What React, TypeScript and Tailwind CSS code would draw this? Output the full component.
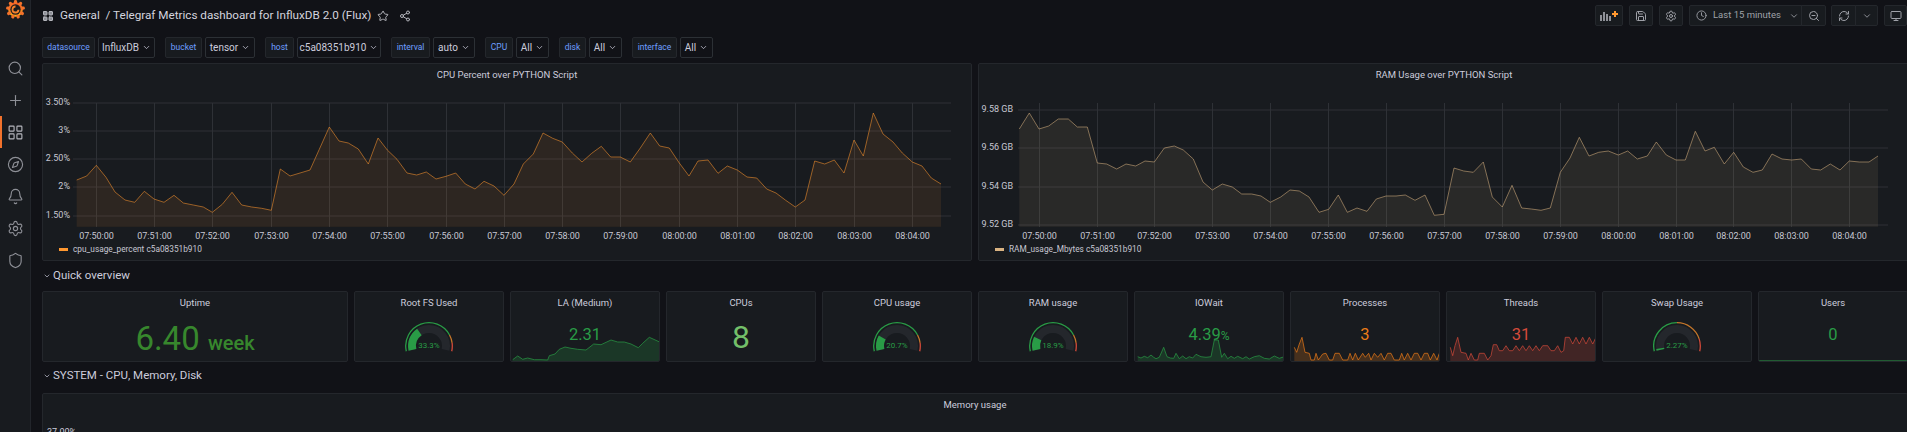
import { Bell, ChevronDown, Clock, Compass, LayoutGrid, Monitor, Plus, RefreshCw, Save, Search, Settings, Share2, Shield, Star, ZoomOut } from "lucide-react"

const cpuPoints: number[][] = [
  [230, 360], [260, 348], [289, 316], [318, 352], [345, 396], [375, 420], [404, 427], [433, 394], [462, 417], [492, 427],
  [522, 406], [550, 429], [580, 435], [610, 441], [637, 457], [667, 433], [696, 397], [725, 435], [755, 441], [785, 445],
  [814, 451], [841, 327], [870, 348], [900, 339], [930, 330], [958, 268], [988, 201], [1017, 243], [1045, 249], [1075, 267],
  [1105, 312], [1134, 234], [1162, 270], [1191, 298], [1221, 339], [1250, 345], [1279, 336], [1308, 357], [1338, 349], [1367, 339],
  [1396, 372], [1425, 387], [1452, 364], [1482, 378], [1512, 406], [1542, 372], [1570, 312], [1600, 282], [1629, 219], [1658, 235],
  [1687, 246], [1717, 279], [1746, 306], [1775, 280], [1804, 259], [1832, 291], [1861, 291], [1891, 306], [1921, 264], [1951, 219],
  [1979, 258], [2008, 264], [2038, 309], [2067, 348], [2094, 303], [2124, 300], [2154, 340], [2182, 318], [2212, 330], [2241, 351],
  [2270, 354], [2300, 387], [2328, 399], [2357, 421], [2386, 441], [2415, 420], [2444, 303], [2474, 312], [2503, 300], [2532, 339],
  [2562, 240], [2590, 288], [2620, 159], [2649, 222], [2679, 246], [2707, 279], [2737, 306], [2766, 318], [2794, 354], [2823, 372],
]

// zoom coords, x counted from page x=970
const ramPoints: number[][] = [
  [148, 207], [178, 159], [207, 207], [236, 198], [265, 177], [295, 177], [322, 201], [352, 201], [382, 309], [410, 312],
  [440, 327], [468, 312], [497, 318], [525, 303], [553, 306], [583, 264], [613, 258], [640, 270], [670, 297], [699, 366],
  [727, 390], [757, 372], [787, 381], [815, 402], [845, 402], [873, 408], [901, 427], [932, 411], [960, 390], [988, 393],
  [1017, 411], [1047, 457], [1076, 448], [1105, 405], [1132, 457], [1161, 444], [1191, 454], [1219, 417], [1248, 408], [1278, 408],
  [1306, 405], [1335, 421], [1365, 405], [1393, 466], [1422, 463], [1452, 324], [1481, 333], [1510, 337], [1540, 306], [1567, 411],
  [1597, 441], [1626, 376], [1655, 444], [1684, 447], [1713, 451], [1741, 444], [1771, 337], [1800, 294], [1828, 232], [1857, 288],
  [1886, 277], [1915, 273], [1945, 285], [1973, 273], [2002, 297], [2032, 288], [2059, 246], [2089, 285], [2118, 300], [2146, 300],
  [2176, 214], [2205, 273], [2233, 262], [2263, 312], [2291, 277], [2320, 321], [2349, 337], [2377, 330], [2406, 282], [2436, 297],
  [2465, 300], [2494, 297], [2524, 327], [2552, 330], [2581, 312], [2610, 330], [2638, 303], [2668, 306], [2697, 306], [2724, 288],
]

const cpuGridX = [96.5, 154.5, 212.5, 271.5, 329.5, 387.5, 446.5, 504.5, 562.5, 620.5, 679.5, 737.5, 795.5, 854.5, 912.5]
const ramGridX = [1039.5, 1097.5, 1154.5, 1212.5, 1270.5, 1328.5, 1386.5, 1444.5, 1502.5, 1560.5, 1618.5, 1676.5, 1733.5, 1791.5, 1849.5]
const times = ["07:50:00", "07:51:00", "07:52:00", "07:53:00", "07:54:00", "07:55:00", "07:56:00", "07:57:00", "07:58:00", "07:59:00", "08:00:00", "08:01:00", "08:02:00", "08:03:00", "08:04:00"]

const variables = [
  { label: "datasource", labelW: "w-[53px]", value: "InfluxDB", valueW: "w-[57px]" },
  { label: "bucket", labelW: "w-[37px]", value: "tensor", valueW: "w-[50px]" },
  { label: "host", labelW: "w-[29px]", value: "c5a08351b910", valueW: "w-[84px]" },
  { label: "interval", labelW: "w-[39px]", value: "auto", valueW: "w-[42px]" },
  { label: "CPU", labelW: "w-[28px]", value: "All", valueW: "w-[33px]" },
  { label: "disk", labelW: "w-[27px]", value: "All", valueW: "w-[33px]" },
  { label: "interface", labelW: "w-[45px]", value: "All", valueW: "w-[33px]" },
]

const toPath = (pts: number[][]) => pts.map((p, i) => `${i ? "L" : "M"}${p[0].toFixed(1)} ${p[1].toFixed(1)}`).join(" ")

function TimeChart(props: {
  points: number[][]
  originX: number
  viewX: number
  width: number
  gridX: number[]
  gridY: number[]
  yLabels: string[]
  labelX: number
  lineLeft: number
  lineRight: number
  color: string
  legend: string
  legendX: number
}) {
  const pts = props.points.map((p) => [props.originX + p[0] / 3, 60 + p[1] / 3])
  const area = `${toPath(pts)} L${pts[pts.length - 1][0].toFixed(1)} 226.7 L${pts[0][0].toFixed(1)} 226.7 Z`
  return (
    <svg width={props.width} height={174} viewBox={`${props.viewX} 86 ${props.width} 174`} className="block">
      {props.gridY.map((y) => (
        <line key={y} x1={props.lineLeft} x2={props.lineRight} y1={y} y2={y} stroke="#2e3136" />
      ))}
      {props.gridX.map((x) => (
        <line key={x} x1={x} x2={x} y1={103} y2={227} stroke="#2e3136" />
      ))}
      <path d={area} fill={props.color} fillOpacity={0.095} />
      <path d={toPath(pts)} fill="none" stroke={props.color} strokeOpacity={0.55} strokeWidth={1} />
      {props.gridY.map((y, i) => (
        <text key={y} x={props.labelX} y={y + 2} textAnchor="end" className="fill-[#c7c7d2] text-[9px]">
          {props.yLabels[i]}
        </text>
      ))}
      {props.gridX.map((x, i) => (
        <text key={x} x={x} y={239} textAnchor="middle" className="fill-[#c7c7d2] text-[9px]">
          {times[i]}
        </text>
      ))}
      <rect x={props.legendX} y={248} width={9} height={3} fill={props.color} />
      <text x={props.legendX + 14} y={252} className="fill-[#c7c7d2] text-[8.3px]">
        {props.legend}
      </text>
    </svg>
  )
}

function polar(r: number, deg: number) {
  const a = (deg * Math.PI) / 180
  return [24 + r * Math.sin(a), 24 - r * Math.cos(a)]
}

function arc(r: number, from: number, to: number) {
  const a = -103 + 206 * from
  const b = -103 + 206 * to
  const s = polar(r, a)
  const e = polar(r, b)
  return `M${s[0].toFixed(2)} ${s[1].toFixed(2)} A${r} ${r} 0 ${b - a > 180 ? 1 : 0} 1 ${e[0].toFixed(2)} ${e[1].toFixed(2)}`
}

function Gauge({ value, text, green = 0.8, orange = 0.9 }: { value: number; text: string; green?: number; orange?: number }) {
  return (
    <svg width={48} height={32} viewBox="0 0 48 32" className="mx-auto mt-[8px] block">
      <path d={arc(23.3, 0, green)} fill="none" stroke="#299c46" strokeWidth={1.3} />
      <path d={arc(23.3, green, orange)} fill="none" stroke="#c4762a" strokeWidth={1.3} />
      <path d={arc(23.3, orange, 1)} fill="none" stroke="#d44a3a" strokeWidth={1.3} />
      <path d={arc(17, 0, 1)} fill="none" stroke="#24272c" strokeWidth={8} />
      <path d={arc(17, 0, value)} fill="none" stroke="#299c46" strokeWidth={8} />
      <text x={24} y={26} textAnchor="middle" className="fill-[#299c46] text-[8px]">
        {text}
      </text>
    </svg>
  )
}

const laSpark: number[][] = [[335, 137], [350, 126], [365, 136], [380, 132], [400, 137], [420, 137], [440, 138], [445, 125], [462, 120], [475, 106], [492, 99], [510, 103], [530, 106], [555, 108], [578, 90], [600, 92], [630, 78], [650, 84], [670, 84], [690, 90], [712, 101], [725, 88], [745, 70], [778, 85]]
const ioSpark: number[][] = [[20, 98], [30, 102], [40, 97], [50, 101], [60, 93], [68, 100], [75, 104], [85, 100], [98, 70], [108, 98], [118, 102], [128, 103], [135, 88], [145, 104], [155, 96], [165, 104], [175, 98], [185, 102], [195, 91], [210, 98], [225, 100], [240, 98], [250, 48], [262, 48], [272, 100], [280, 88], [290, 104], [300, 97], [310, 103], [320, 97], [335, 104], [345, 98], [355, 105], [370, 98], [385, 95], [400, 103], [415, 105], [430, 96], [445, 103], [460, 98]]
const procSpark: number[][] = [[490, 70], [497, 85], [505, 60], [513, 40], [522, 85], [535, 88], [540, 108], [550, 108], [555, 88], [562, 108], [575, 90], [585, 88], [595, 108], [605, 108], [612, 88], [625, 88], [635, 108], [650, 108], [657, 88], [665, 108], [673, 88], [682, 108], [695, 88], [703, 100], [713, 88], [720, 108], [730, 88], [740, 100], [750, 88], [760, 108], [770, 88], [780, 88], [790, 108], [805, 108], [812, 88], [820, 108], [830, 88], [840, 108], [850, 88], [860, 88], [870, 108], [880, 88], [890, 88], [898, 108], [908, 88], [918, 108], [925, 88], [930, 85]]
const threadSpark: number[][] = [[958, 70], [965, 95], [972, 65], [980, 40], [990, 85], [1005, 88], [1012, 108], [1020, 88], [1030, 108], [1040, 108], [1045, 88], [1060, 88], [1070, 108], [1080, 95], [1087, 62], [1097, 62], [1105, 80], [1115, 80], [1125, 65], [1135, 80], [1145, 80], [1155, 65], [1165, 80], [1175, 65], [1185, 80], [1195, 65], [1205, 80], [1215, 65], [1225, 80], [1235, 65], [1250, 65], [1260, 80], [1270, 80], [1280, 65], [1290, 85], [1298, 80], [1303, 40], [1315, 40], [1325, 60], [1335, 40], [1345, 60], [1355, 40], [1365, 60], [1375, 40], [1385, 60], [1395, 40], [1400, 60]]

// points come from zoomed crops, so scale them back to panel pixels
function Spark({ points, left, top, zoomTop, zoomLeft, color }: { points: number[][]; left: number; top: number; zoomTop: number; zoomLeft: number; color: string }) {
  const pts = points.map((p) => [zoomLeft + p[0] / 3 - left, zoomTop + p[1] / 3 - top])
  const first = pts[0][0].toFixed(1)
  const last = pts[pts.length - 1][0].toFixed(1)
  return (
    <svg width={150} height={40} viewBox="0 0 150 40" className="absolute bottom-0 left-0">
      <path d={`${toPath(pts)} L${last} 40 L${first} 40 Z`} fill={color} fillOpacity={0.22} />
      <path d={toPath(pts)} fill="none" stroke={color} strokeOpacity={0.7} strokeWidth={1} />
    </svg>
  )
}

function StatPanel({ title, children }: { title: string; children?: React.ReactNode }) {
  return (
    <div className="relative h-[71px] overflow-hidden rounded-[2px] border border-[#24272c] bg-[#181b1f]">
      <div className="flex h-[22px] items-center justify-center text-[9.5px] text-[#ccccdc]">{title}</div>
      {children}
    </div>
  )
}

function BigValue({ children, className }: { children: React.ReactNode; className: string }) {
  return <div className={`relative z-10 text-center leading-none ${className}`}>{children}</div>
}

function Logo() {
  const teeth = Array.from({ length: 9 }, (_, i) => (i * 360) / 9)
  return (
    <svg width={19} height={19} viewBox="0 0 22 22">
      <defs>
        <linearGradient id="logo" x1="0" y1="1" x2="0" y2="0">
          <stop offset="0" stopColor="#fcc00f" />
          <stop offset="0.5" stopColor="#f58220" />
          <stop offset="1" stopColor="#ee4b26" />
        </linearGradient>
      </defs>
      <circle cx={11} cy={11} r={8.5} fill="url(#logo)" />
      {teeth.map((a) => (
        <rect key={a} x={9.2} y={0} width={3.6} height={5} rx={1.6} fill="#f3722a" transform={`rotate(${a} 11 11)`} />
      ))}
      <circle cx={11} cy={11} r={6} fill="#181b1f" />
      <path d="M11 6.5a4.5 4.5 0 1 0 4.5 4.7h-2.2a2.4 2.4 0 1 1-2.3-2.6z" fill="#f3802b" />
    </svg>
  )
}

function ToolButton({ className, children }: { className: string; children: React.ReactNode }) {
  return (
    <div className={`flex h-[21px] shrink-0 items-center justify-center rounded-[2px] border border-[#24272c] bg-[#181b1f] text-[#9fa1a8] ${className}`}>
      {children}
    </div>
  )
}

const sideIcons = [Search, Plus, LayoutGrid, Compass, Bell, Settings, Shield]

export default function App() {
  return (
    <div className="flex h-[432px] w-full overflow-hidden bg-[#111217] font-['Roboto',sans-serif] text-[#ccccdc]">
      {/* Sidebar */}
      <aside className="flex w-[31px] shrink-0 flex-col items-center border-r border-[#22252b] bg-[#181b1f]">
        <div className="flex h-[52px] w-full justify-center">
          <Logo />
        </div>
        {sideIcons.map((Icon, i) => (
          <div key={i} className={`flex h-[32px] w-full items-center justify-center text-[#8e9097] ${i === 2 ? "border-l-2 border-[#f2722c] pr-[2px] text-[#b5b6bd]" : ""}`}>
            <Icon size={17} strokeWidth={1.6} />
          </div>
        ))}
      </aside>

      <main className="min-w-0 flex-1 overflow-hidden pl-[11px]">
        {/* Top bar */}
        <div className="mt-[5px] flex h-[21px] items-center">
          <LayoutGrid size={12} className="text-[#b5b6bd]" fill="#8e9097" />
          <span className="ml-[6px] whitespace-nowrap text-[11.7px] text-[#d4d4de]">General&nbsp; / Telegraf Metrics dashboard for InfluxDB 2.0 (Flux)</span>
          <Star size={12} className="ml-[6px] text-[#b5b6bd]" />
          <Share2 size={12} className="ml-[10px] text-[#b5b6bd]" />
          <div className="ml-auto flex items-center">
            <ToolButton className="w-[28px]">
              <svg width={18} height={10} viewBox="0 0 18 10">
                <rect x={0} y={4} width={2} height={6} fill="#8e9097" />
                <rect x={3} y={1} width={2} height={9} fill="#8e9097" />
                <rect x={6} y={3} width={2} height={7} fill="#8e9097" />
                <rect x={9} y={5} width={2} height={5} fill="#8e9097" />
                <path d="M12 3h6M15 0v6" stroke="#ff9830" strokeWidth={2} />
              </svg>
            </ToolButton>
            <ToolButton className="ml-[6px] w-[24px]"><Save size={12} /></ToolButton>
            <ToolButton className="ml-[6px] w-[24px]"><Settings size={12} /></ToolButton>
            <ToolButton className="ml-[6px] w-[113px] justify-start rounded-r-none pl-[6px]">
              <Clock size={11} />
              <span className="ml-[6px] whitespace-nowrap text-[9.5px]">Last 15 minutes</span>
              <ChevronDown size={10} className="ml-[8px]" />
            </ToolButton>
            <ToolButton className="ml-[-1px] w-[25px] rounded-l-none"><ZoomOut size={12} /></ToolButton>
            <ToolButton className="ml-[5px] w-[25px] rounded-r-none"><RefreshCw size={12} /></ToolButton>
            <ToolButton className="ml-[-1px] w-[23px] rounded-l-none"><ChevronDown size={10} /></ToolButton>
            <ToolButton className="ml-[6px] w-[23px]"><Monitor size={12} /></ToolButton>
          </div>
        </div>

        {/* Template variables */}
        <div className="mt-[11px] flex h-[21px] gap-[10px]">
          {variables.map((v) => (
            <div key={v.label} className="flex gap-[3px]">
              <div className={`flex items-center justify-center rounded-[2px] border border-[#24272c] bg-[#181b1f] text-[8.5px] text-[#6e9fff] ${v.labelW}`}>{v.label}</div>
              <div className={`flex items-center justify-center gap-[3px] rounded-[2px] border border-[#2c3035] bg-[#111217] text-[10px] text-[#ccccdc] ${v.valueW}`}>
                {v.value}
                <ChevronDown size={9} />
              </div>
            </div>
          ))}
        </div>

        {/* Time series panels */}
        <div className="mt-[5px] grid w-[1870px] grid-cols-[930px_932px] gap-[6px]">
          <div className="h-[198px] overflow-hidden rounded-[2px] border border-[#24272c] bg-[#181b1f]">
            <div className="flex h-[22px] items-center justify-center text-[9.5px]">CPU Percent over PYTHON Script</div>
            <TimeChart
              points={cpuPoints}
              originX={0}
              viewX={43}
              width={928}
              gridX={cpuGridX}
              gridY={[103, 131, 159, 187, 216]}
              yLabels={["3.50%", "3%", "2.50%", "2%", "1.50%"]}
              labelX={70}
              lineLeft={73}
              lineRight={951}
              color="#ff9830"
              legend="cpu_usage_percent c5a08351b910"
              legendX={59}
            />
          </div>
          <div className="h-[198px] overflow-hidden rounded-[2px] border border-[#24272c] bg-[#181b1f]">
            <div className="flex h-[22px] items-center justify-center text-[9.5px]">RAM Usage over PYTHON Script</div>
            <TimeChart
              points={ramPoints}
              originX={970}
              viewX={979}
              width={930}
              gridX={ramGridX}
              gridY={[110, 148, 187, 225]}
              yLabels={["9.58 GB", "9.56 GB", "9.54 GB", "9.52 GB"]}
              labelX={1013}
              lineLeft={1018}
              lineRight={1888}
              color="#d9b382"
              legend="RAM_usage_Mbytes c5a08351b910"
              legendX={995}
            />
          </div>
        </div>

        {/* Quick overview */}
        <div className="flex h-[30px] items-center gap-[2px] pl-[1px] text-[11.5px] text-[#ccccdc]">
          <ChevronDown size={8} />
          Quick overview
        </div>
        <div className="grid w-[1866px] grid-cols-[306px_repeat(10,150px)] gap-[6px]">
          <StatPanel title="Uptime">
            <BigValue className="mt-[8px] text-[33px] text-[#37872d]">
              6.40 <span className="text-[20px] font-medium">week</span>
            </BigValue>
          </StatPanel>
          <StatPanel title="Root FS Used">
            <Gauge value={0.333} text="33.3%" />
          </StatPanel>
          <StatPanel title="LA (Medium)">
            <BigValue className="mt-[13px] text-[16.5px] text-[#299c46]">2.31</BigValue>
            <Spark points={laSpark} left={510} top={322} zoomLeft={400} zoomTop={315} color="#299c46" />
          </StatPanel>
          <StatPanel title="CPUs">
            <BigValue className="mt-[7px] text-[32px] text-[#73bf69]">8</BigValue>
          </StatPanel>
          <StatPanel title="CPU usage">
            <Gauge value={0.207} text="20.7%" />
          </StatPanel>
          <StatPanel title="RAM usage">
            <Gauge value={0.189} text="18.9%" />
          </StatPanel>
          <StatPanel title="IOWait">
            <BigValue className="mt-[13px] text-[16.5px] text-[#299c46]">
              4.39<span className="text-[12px]">%</span>
            </BigValue>
            <Spark points={ioSpark} left={1134} top={322} zoomLeft={1130} zoomTop={325} color="#299c46" />
          </StatPanel>
          <StatPanel title="Processes">
            <BigValue className="mt-[13px] text-[16.5px] text-[#eb7b18]">3</BigValue>
            <Spark points={procSpark} left={1290} top={322} zoomLeft={1130} zoomTop={325} color="#eb7b18" />
          </StatPanel>
          <StatPanel title="Threads">
            <BigValue className="mt-[13px] text-[16.5px] text-[#d44a3a]">31</BigValue>
            <Spark points={threadSpark} left={1446} top={322} zoomLeft={1130} zoomTop={325} color="#d44a3a" />
          </StatPanel>
          <StatPanel title="Swap Usage">
            <Gauge value={0.0227} text="2.27%" green={0.5} orange={0.85} />
          </StatPanel>
          <StatPanel title="Users">
            <BigValue className="mt-[13px] text-[16.5px] text-[#299c46]">0</BigValue>
            <div className="absolute bottom-0 left-0 h-px w-full bg-[#299c46] opacity-50" />
          </StatPanel>
        </div>

        {/* System row */}
        <div className="flex h-[31px] items-center gap-[2px] pb-[3px] pl-[1px] text-[11.5px] text-[#ccccdc]">
          <ChevronDown size={8} />
          SYSTEM - CPU, Memory, Disk
        </div>
        <div className="h-[200px] w-[1866px] rounded-[2px] border border-[#24272c] bg-[#181b1f]">
          <div className="flex h-[22px] items-center justify-center text-[9.5px]">Memory usage</div>
          <div className="mt-[12px] pl-[4px] text-[9px] leading-none">37.00%</div>
        </div>
      </main>
    </div>
  )
}
